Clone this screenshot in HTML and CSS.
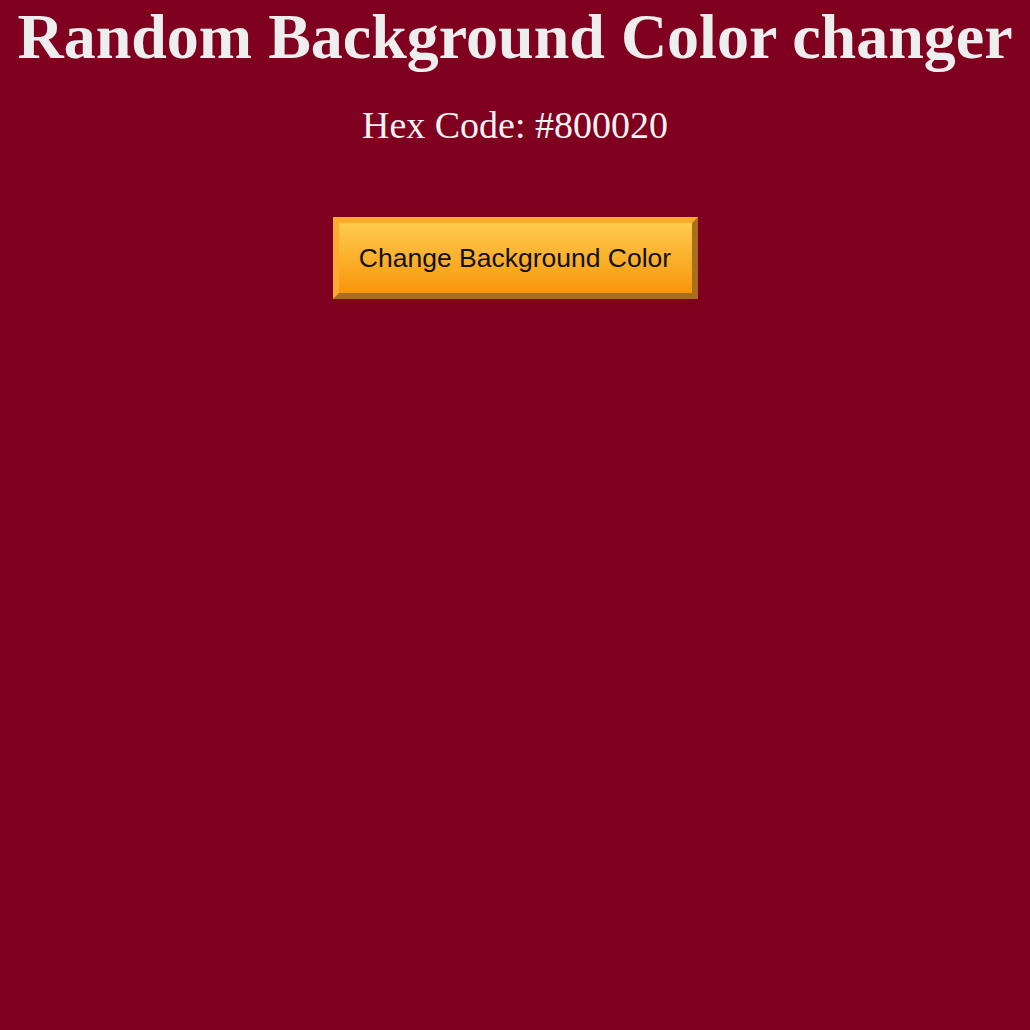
FILE: index.html
```html
<!DOCTYPE html>
<html>
<head>
<meta charset="utf-8">
<link rel="stylesheet" href="styles.css">
</head>
<body>
<div class="page">
  <h1 class="title">Random Background Color changer</h1>
  <p class="hex">Hex Code: #800020</p>
  <button class="change-btn">Change Background Color</button>
</div>
</body>
</html>
```
FILE: styles.css
```css
html, body {
  margin: 0;
  padding: 0;
  background: #800020;
  height: 100%;
}
.page {
  display: flex;
  flex-direction: column;
  align-items: center;
  font-family: "Liberation Serif", "Times New Roman", serif;
}
.title {
  margin: 0;
  font-size: 64px;
  font-weight: bold;
  color: #eeeeee;
  white-space: nowrap;
}
.hex {
  margin: 29px 0 0;
  font-size: 38px;
  color: #f2f2f2;
}
.change-btn {
  margin-top: 70px;
  width: 365px;
  height: 82px;
  font-family: "Liberation Sans", Arial, sans-serif;
  font-size: 26.5px;
  color: #111;
  background: linear-gradient(to bottom, #ffcb4c, #f8960c);
  border: 6px solid #ffa930;
  border-right-color: #a8701e;
  border-bottom-color: #a8701e;
  cursor: pointer;
}
```
